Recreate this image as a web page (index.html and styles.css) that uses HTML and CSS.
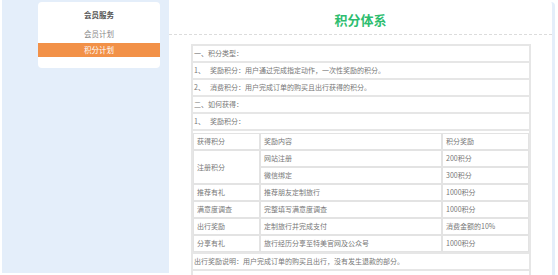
FILE: index.html
```html
<!DOCTYPE html>
<html lang="zh-CN">
<head>
<meta charset="utf-8">
<title>积分体系</title>
<link rel="stylesheet" href="styles.css">
</head>
<body>
<div class="page">
  <aside class="side">
    <div class="card">
      <div class="card-title">会员服务</div>
      <a class="item">会员计划</a>
      <a class="item active">积分计划</a>
    </div>
  </aside>
  <main class="main">
    <h1 class="title">积分体系</h1>
    <div class="content">
      <table class="outer">
        <tr><td>一、积分类型：</td></tr>
        <tr><td>1、<span class="gap"></span>奖励积分：用户通过完成指定动作，一次性奖励的积分。</td></tr>
        <tr><td>2、<span class="gap"></span>消费积分：用户完成订单的购买且出行获得的积分。</td></tr>
        <tr><td>二、如何获得：</td></tr>
        <tr><td>1、<span class="gap"></span>奖励积分：</td></tr>
        <tr><td class="holder">
          <table class="inner">
            <colgroup><col class="c1"><col class="c2"><col></colgroup>
            <tr><td>获得积分</td><td>奖励内容</td><td>积分奖励</td></tr>
            <tr><td rowspan="2">注册积分</td><td>网站注册</td><td>200积分</td></tr>
            <tr><td>微信绑定</td><td>300积分</td></tr>
            <tr><td>推荐有礼</td><td>推荐朋友定制旅行</td><td>1000积分</td></tr>
            <tr><td>满意度调查</td><td>完整填写满意度调查</td><td>1000积分</td></tr>
            <tr><td>出行奖励</td><td>定制旅行并完成支付</td><td>消费金额的10%</td></tr>
            <tr><td>分享有礼</td><td>旅行经历分享至特美官网及公众号</td><td>1000积分</td></tr>
          </table>
        </td></tr>
        <tr><td>出行奖励说明：用户完成订单的购买且出行，没有发生退款的部分。</td></tr>
        <tr><td>&nbsp;</td></tr>
      </table>
    </div>
  </main>
</div>
</body>
</html>
```

FILE: styles.css
```css
html, body {
  margin: 0;
  padding: 0;
  background: #fff;
  overflow: hidden;
}
body {
  font-family: "Noto Sans CJK SC", "Noto Sans", sans-serif;
}
.page {
  display: flex;
  align-items: flex-start;
  margin-left: 2px;
  width: 553px;
  height: 275px;
}
.side {
  width: 167px;
  height: 273px;
  flex: none;
  box-sizing: border-box;
  background: #e4eefa;
  padding: 2px 9px 0 36px;
}
.card {
  background: #fff;
  border-radius: 4px;
  padding: 3px 0 11px;
  text-align: center;
}
.card-title {
  font-size: 7.5px;
  line-height: 20px;
  font-weight: bold;
  color: #555;
}
.item {
  display: block;
  font-size: 7.5px;
  line-height: 18px;
  color: #888;
  text-decoration: none;
}
.item.active {
  line-height: 14px;
  background: #f29148;
  color: #fff;
}
.main {
  flex: none;
  width: 383px;
  height: 273px;
  margin-top: 2px;
  background: #fff;
  border-right: 3px solid #e4eefa;
  border-top-right-radius: 4px;
  overflow: hidden;
}
.title {
  margin: 0;
  padding-top: 4px;
  height: 28px;
  line-height: 28px;
  font-size: 13px;
  font-weight: bold;
  color: #2dbd6f;
  text-align: center;
  border-bottom: 1px dashed #dcdcdc;
}
.content {
  padding: 9px 21px 0 22px;
}
.outer, .inner {
  border-collapse: separate;
  border-spacing: 0;
  width: 100%;
  font-size: 7px;
  color: #777;
}
.outer {
  border: 1px solid #e6e6e6;
}
.outer td {
  border: 1px solid #e6e6e6;
  padding: 0 1px;
  height: 15px;
  line-height: 15px;
  white-space: nowrap;
}
.outer td.holder {
  padding: 2px 0 0 0;
}
.inner td {
  border: 1px solid #e3e3e3;
  padding: 0 3px;
  height: 15px;
  line-height: 15px;
}
.inner .c1 { width: 67px; }
.inner .c2 { width: 182px; }
.gap {
  display: inline-block;
  width: 5px;
}
```
